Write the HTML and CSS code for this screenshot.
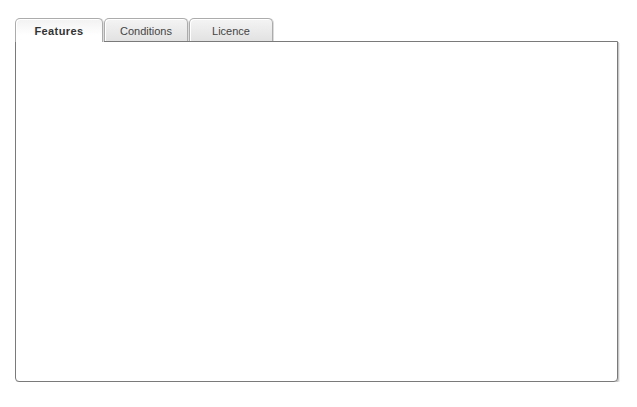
FILE: index.html
```html
<!DOCTYPE html>
<html>
<head>
<meta charset="utf-8">
<link rel="stylesheet" href="styles.css">
</head>
<body>
<div class="tabs">
  <div class="tabbar">
    <div class="tab active">Features</div>
    <div class="tab">Conditions</div>
    <div class="tab">Licence</div>
  </div>
  <div class="panel"></div>
</div>
</body>
</html>
```
FILE: styles.css
```css
html, body { margin: 0; padding: 0; background: #fff; }
body { font-family: "Liberation Sans", Arial, sans-serif; font-size: 11px; color: #333; }
.tabs { padding: 18px 0 0 15px; width: 603px; }
.tabbar { display: flex; gap: 1px; height: 23px; position: relative; z-index: 1; }
.tab {
  box-sizing: border-box;
  width: 84px; height: 23px;
  border: 1px solid #acacac; border-bottom: none;
  border-radius: 5px 5px 0 0;
  background: linear-gradient(#f4f4f4, #e2e2e2);
  box-shadow: inset 1px 1px 0 #fff, 1px 0 0 #dcdcdc;
  display: flex; align-items: center; justify-content: center;
  padding-top: 2px;
  color: #444;
}
.tab.active {
  width: 88px; height: 24px;
  background: linear-gradient(#f2f2f2, #fff 70%);
  font-weight: bold; color: #333;
  letter-spacing: 0.4px;
  padding-top: 1px;
}
.panel {
  box-sizing: border-box;
  height: 341px;
  border: 1px solid #7a7a7a;
  border-radius: 0 0 4px 4px;
  box-shadow: 1px 1px 0 #c8c8c8, 2px 2px 0 #eee;
  background: #fff;
}
```
